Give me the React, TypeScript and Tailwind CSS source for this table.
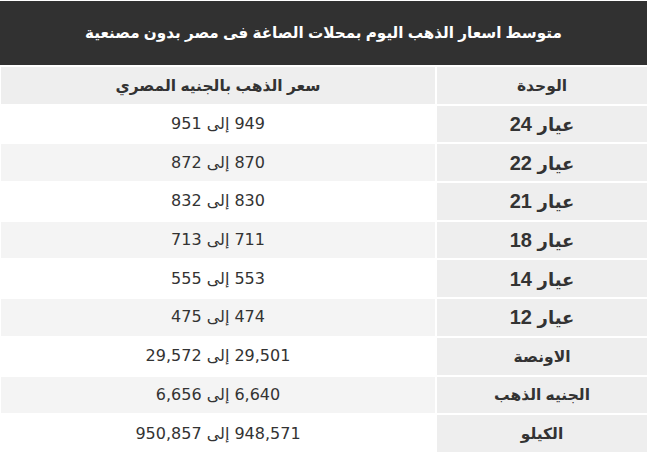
import React from "react";

const rows: { label: string; num?: string; value: string }[] = [
  { label: "عيار", num: "24", value: "949 إلى 951" },
  { label: "عيار", num: "22", value: "870 إلى 872" },
  { label: "عيار", num: "21", value: "830 إلى 832" },
  { label: "عيار", num: "18", value: "711 إلى 713" },
  { label: "عيار", num: "14", value: "553 إلى 555" },
  { label: "عيار", num: "12", value: "474 إلى 475" },
  { label: "الاونصة", value: "29,501 إلى 29,572" },
  { label: "الجنيه الذهب", value: "6,640 إلى 6,656" },
  { label: "الكيلو", value: "948,571 إلى 950,857" },
];

export default function App() {
  return (
    <div className="w-[655px] h-[463px] overflow-hidden bg-white">
      <div dir="rtl" className="w-[647px] mt-px">
        <div className="h-[64px] bg-[#313131] flex items-center justify-center text-white font-bold text-[15.2px] font-['Liberation_Sans','DejaVu_Sans',sans-serif]">
          متوسط اسعار الذهب اليوم بمحلات الصاغة فى مصر بدون مصنعية
        </div>
        <div className="mt-[2px] w-[646px] grid grid-cols-[210px_434px] gap-[2px] auto-rows-[36.7px] text-[#333] ">
          <div className="bg-[#eeeeee] flex items-center justify-center font-bold text-[15.5px] font-['Liberation_Sans','DejaVu_Sans',sans-serif]">
            الوحدة
          </div>
          <div className="bg-[#eeeeee] flex items-center justify-center font-bold text-[15.5px] font-['Liberation_Sans','DejaVu_Sans',sans-serif]">
            سعر الذهب بالجنيه المصري
          </div>
          {rows.map((r, i) => (
            <React.Fragment key={i}>
              <div className="bg-[#eeeeee] flex items-center justify-center font-bold font-['Liberation_Sans','DejaVu_Sans',sans-serif]">
                {r.num ? (
                  <span className="text-[20px]">
                    <span className="text-[18px]">{r.label}</span> {r.num}
                  </span>
                ) : (
                  <span className="text-[15.5px]">{r.label}</span>
                )}
              </div>
              <div
                className={
                  (i % 2 === 0 ? "bg-white" : "bg-[#f4f4f4]") +
                  " flex items-center justify-center text-[16px] font-['DejaVu_Sans',sans-serif]"
                }
              >
                {r.value}
              </div>
            </React.Fragment>
          ))}
        </div>
      </div>
    </div>
  );
}
